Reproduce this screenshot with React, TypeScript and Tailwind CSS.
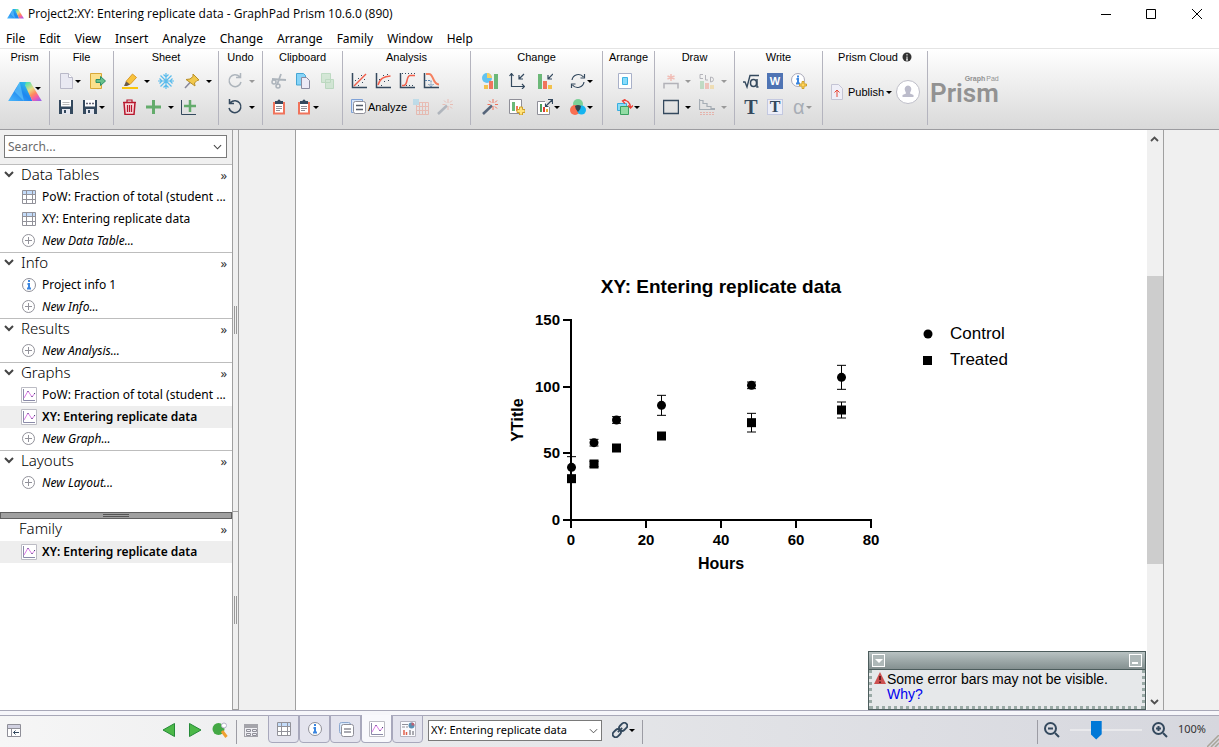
import React from 'react';

const NAVY = '#34495e';
const ORANGE = '#f0745c';
const GREEN = '#6cb878';
const GREY = '#8f8f98';

interface IconProps {
  children: React.ReactNode;
  faded?: boolean;
}

const Icon: React.FC<IconProps> = ({ children, faded }) => (
  <svg viewBox="0 0 16 16" width="16" height="16" fill="none" className={`shrink-0 ${faded ? 'opacity-35' : ''}`}>
    {children}
  </svg>
);

const Caret: React.FC<{ faded?: boolean }> = ({ faded }) => (
  <svg viewBox="0 0 8 8" width="8" height="8" className="shrink-0">
    <path d="M1 3h6L4 6z" fill={faded ? '#999' : '#000'} />
  </svg>
);

interface ToolProps {
  label: string;
  width?: string;
  caret?: 'near' | 'far';
  faded?: boolean;
  children: React.ReactNode;
}

const Tool: React.FC<ToolProps> = ({ label, width = 'w-6', caret, faded, children }) => (
  <button aria-label={label} className={`flex h-[26px] shrink-0 items-center ${width} ${caret === 'far' ? 'gap-[5px]' : ''}`}>
    <Icon faded={faded}>{children}</Icon>
    {caret && <Caret faded={faded} />}
  </button>
);

interface GroupProps {
  title: React.ReactNode;
  width: string;
  pad?: string;
  children: React.ReactNode;
}

const Group: React.FC<GroupProps> = ({ title, width, pad = 'pl-2', children }) => (
  <section className={`mt-0.5 mb-1 flex shrink-0 flex-col border-r border-[#b4b4be] ${width}`}>
    <h2 className="flex h-[17px] items-start justify-center gap-1 text-[11px] leading-3">{title}</h2>
    <div className={pad}>{children}</div>
  </section>
);

const Row: React.FC<{ children: React.ReactNode }> = ({ children }) => <div className="flex">{children}</div>;

const PrismLogo: React.FC<{ id: string; width: number; height: number }> = ({ id, width, height }) => (
  <svg viewBox="0 0 32 19" width={width} height={height}>
    <defs>
      <linearGradient id={`${id}a`} x1="0" y1="1" x2="1" y2="0">
        <stop offset="0" stopColor="#4bb8fa" />
        <stop offset="0.5" stopColor="#1e86f0" />
        <stop offset="1" stopColor="#35d6e8" />
      </linearGradient>
      <linearGradient id={`${id}b`} x1="0.2" y1="0" x2="0.8" y2="1">
        <stop offset="0" stopColor="#52e0b0" />
        <stop offset="0.35" stopColor="#e8dc82" />
        <stop offset="0.6" stopColor="#ff8a5c" />
        <stop offset="0.8" stopColor="#f45ca8" />
        <stop offset="1" stopColor="#a060e8" />
      </linearGradient>
    </defs>
    <path d="M11 0h10l-3 5 5 13H0z" fill={`url(#${id}a)`} />
    <path d="M11 0l-5 9 9 9z" fill="#6fd0fb" opacity=".55" />
    <path d="M16 3l1-3h4l11 18h-9z" fill={`url(#${id}b)`} />
  </svg>
);

const clipboardIcon = (
  <>
    <path d="M2 3h12v12.5H2z" fill={ORANGE} />
    <path d="M4 5h8v8.5H4z" fill="#fff" />
    <path d="M5 7.5h6M5 9.5h6M5 11.5h4" stroke={GREY} />
    <path d="M4 2h2.5a1.5 1.5 0 0 1 3 0H12v3H4z" fill={NAVY} />
  </>
);

const axes = <path d="M1.5 0v14.5H16" stroke={NAVY} strokeWidth="1.5" />;

const wand = (
  <>
    <path d="M1 15L10 6.500" stroke="#56657a" strokeWidth="2.500" />
    <path d="M11 0v4M11 7v4M5.500 5.500h3M13 5.500h3M7 1.500l2 2M15 1.500l-2 2M15 9.500l-2-2" stroke={ORANGE} />
  </>
);

const tableIcon = (
  <>
    <path d="M1.5 1.5h13v13h-13z" fill="#fff" />
    <path d="M1.5 1.5h13v4h-13z" fill="#c4dcfa" />
    <path d="M1.5 1.5h13v13h-13zM5.5 1.5v13M11.5 1.5v13M1.5 5.5h13M1.5 10.5h13" stroke="#92929a" />
  </>
);

const infoIcon = (
  <>
    <circle cx="8" cy="8" r="6.500" fill="#fff" stroke={GREY} />
    <path d="M8 3v2M6.500 7H8v4.500M6 11.500h4" stroke="#3b86e0" strokeWidth="2" />
  </>
);

const plusIcon = (
  <>
    <circle cx="7.5" cy="7.5" r="6" stroke="#92929a" />
    <path d="M7.5 4v7M4 7.5h7" stroke="#92929a" />
  </>
);

const graphIcon = (
  <>
    <path d="M.5.5h15v15H.5z" fill="#fff" stroke="#bcbcc4" />
    <path d="M2.5 2v11.500H14" stroke="#8a8aa8" />
    <path d="M3 11l4-7 4 6 3-4" stroke="#dc7ce8" />
    <path d="M7 4v1M11 9v1M13.500 6v1" stroke="#4a4a78" />
  </>
);

const arrowDown = <path d="M4 6l4 4 4-4" stroke="#444" strokeWidth="2" />;

interface Entry {
  text: string;
  icon: 'table' | 'info' | 'graph' | 'new';
  bold?: boolean;
}

const entryIcons = { table: tableIcon, info: infoIcon, graph: graphIcon, new: plusIcon };

const sections: { title: string; entries: Entry[] }[] = [
  {
    title: 'Data Tables',
    entries: [
      { text: 'PoW: Fraction of total (student ...', icon: 'table' },
      { text: 'XY: Entering replicate data', icon: 'table' },
      { text: 'New Data Table...', icon: 'new' },
    ],
  },
  {
    title: 'Info',
    entries: [
      { text: 'Project info 1', icon: 'info' },
      { text: 'New Info...', icon: 'new' },
    ],
  },
  { title: 'Results', entries: [{ text: 'New Analysis...', icon: 'new' }] },
  {
    title: 'Graphs',
    entries: [
      { text: 'PoW: Fraction of total (student ...', icon: 'graph' },
      { text: 'XY: Entering replicate data', icon: 'graph', bold: true },
      { text: 'New Graph...', icon: 'new' },
    ],
  },
  { title: 'Layouts', entries: [{ text: 'New Layout...', icon: 'new' }] },
];

const SectionHeader: React.FC<{ title: string; open?: boolean }> = ({ title, open }) => (
  <div className={`flex items-start pr-[5px] ${open ? 'h-[21px]' : 'h-[22px]'}`}>
    <button className="flex flex-1 items-center gap-1 pl-px text-left text-[15px] leading-[18px] font-light">
      {open ? <Icon>{arrowDown}</Icon> : <span className="w-3.5" />}
      {title}
    </button>
    <button className="pt-0.5 text-[13px] leading-4 text-[#333]">»</button>
  </div>
);

const EntryRow: React.FC<{ entry: Entry }> = ({ entry }) => {
  const tone = entry.bold ? 'bg-[#eeeeee] font-semibold' : '';
  return (
    <button className={`flex h-[22px] w-full items-center gap-[5px] pl-[21px] text-left text-[12px] whitespace-nowrap ${tone}`}>
      <Icon>{entryIcons[entry.icon]}</Icon>
      <span className={entry.icon === 'new' ? 'italic' : ''}>{entry.text}</span>
    </button>
  );
};

const Ribbon: React.FC = () => (
  <div className="flex h-[82px] shrink-0 overflow-hidden border-t border-b border-t-[#e4e4e4] border-b-[#9c9ca0] bg-linear-to-b from-white to-[#d9d9d9] font-['Liberation_Sans',sans-serif]">
    <Group title="Prism" width="w-[50px]">
      <button aria-label="Prism menu" className="flex h-12 items-center">
        <PrismLogo id="big" width={34} height={20} />
        <span className="-mt-2 -ml-2"><Caret /></span>
      </button>
    </Group>
    <Group title="File" width="w-[64px]">
      <Row>
        <Tool label="New" width="w-8" caret="near">
          <path d="M2.500.500h8l4 4v11h-12z" fill="#e9e9f2" stroke="#b9b9c8" />
          <path d="M10.500.500v4h4" fill="#fff" stroke="#b9b9c8" />
        </Tool>
        <Tool label="Open">
          <path d="M.5.500h11v15H.500z" fill="#fbe08c" stroke="#d8a838" />
          <path d="M6 6.500h4.500V3.500L15.500 8l-5 4.500v-3H6z" fill="#66c08c" stroke="#2e8f68" />
        </Tool>
      </Row>
      <Row>
        <Tool label="Save">
          <path d="M1 1h14v14H1z" fill={NAVY} />
          <path d="M3 1h10v6.500H3z" fill="#fff" />
          <path d="M4.500 3.500h7M4.500 5.500h7" stroke="#bbb" />
          <path d="M4 10h8v5H4z" fill="#e4e6ee" />
          <path d="M6 11h2v3H6z" fill={NAVY} />
        </Tool>
        <Tool label="Save as" caret="near">
          <path d="M1 1h14v14H1z" fill={NAVY} />
          <path d="M3 1h10v6.500H3z" fill="#fff" />
          <path d="M4 4.500h2M7 4.500h2M10 4.500h2" stroke="#667" strokeWidth="1.500" />
          <path d="M4 10h8v5H4z" fill="#e4e6ee" />
          <path d="M6 11h2v3H6z" fill={NAVY} />
        </Tool>
      </Row>
    </Group>
    <Group title="Sheet" width="w-[105px]">
      <Row>
        <Tool label="Highlight" width="w-9" caret="far">
          <path d="M0 14h16v2H0z" fill="#f9c50c" />
          <path d="M4 8.500l6.500-7.500 4 3.500L8 11.500z" fill="#f8c23c" stroke="#d99a28" />
          <path d="M4 8.500l4 3L5 13H2z" fill="#6b5a48" />
        </Tool>
        <Tool label="Freeze" width="w-[26px]">
          <path d="M8 0v16M0 8h16M2.500 2.500l11 11M13.500 2.500l-11 11M5.500 1.500L8 4l2.500-2.500M5.500 14.500L8 12l2.500 2.500M1.500 5.500L4 8l-2.500 2.500M14.500 5.500L12 8l2.500 2.500" stroke="#5cbcec" strokeWidth="1.200" />
        </Tool>
        <Tool label="Pin" caret="far">
          <path d="M1 15l5.500-6" stroke="#889" strokeWidth="1.500" />
          <path d="M9 1l6 6-2 .5-2.500 2.500.5 3L2 6.500l4-.5L9 3.500z" fill="#f1c84c" stroke="#b98f28" />
        </Tool>
      </Row>
      <Row>
        <Tool label="Delete">
          <path d="M2 3.500h11l-1 12H3z" fill="#f8d8dc" stroke="#b8182e" strokeWidth="1.500" />
          <path d="M1 3.500h13M5 3V1h5v2M5.500 6v7M7.500 6v7M9.500 6v7" stroke="#b8182e" strokeWidth="1.200" />
        </Tool>
        <Tool label="Add" width="w-[34px]" caret="far">
          <path d="M7.500 1v14M0 8h15" stroke="#64ac6c" strokeWidth="3" />
        </Tool>
        <Tool label="Add graph">
          <path d="M1.500 1v14.500H16" stroke={NAVY} />
          <path d="M10 1v12M4 7h12" stroke="#64ac6c" strokeWidth="2.500" />
        </Tool>
      </Row>
    </Group>
    <Group title="Undo" width="w-[44px]">
      <Row>
        <Tool label="Redo" caret="far" faded>
          <path d="M12.500 3.500A6 6 0 1 0 14 9M13.500 0v4.500H9" stroke={NAVY} strokeWidth="1.500" />
        </Tool>
      </Row>
      <Row>
        <Tool label="Undo" caret="far">
          <path d="M3.500 3.500A6 6 0 1 1 2 9M2.500 0v4.500H7" stroke={NAVY} strokeWidth="1.500" />
        </Tool>
      </Row>
    </Group>
    <Group title="Clipboard" width="w-[80px]">
      <Row>
        <Tool label="Cut" width="w-[25px]" faded>
          <path d="M1 6l14 1M10 1L6 12" stroke={NAVY} strokeWidth="1.800" />
          <circle cx="3" cy="9" r="2" stroke={NAVY} strokeWidth="1.500" />
          <circle cx="7" cy="13" r="2" stroke={NAVY} strokeWidth="1.500" />
        </Tool>
        <Tool label="Copy" width="w-[25px]">
          <path d="M.5.500h7l2 2V12h-9z" fill="#86d4f8" stroke="#45a6d4" />
          <path d="M5.500 4.500h5l3 3v8h-8z" fill="#eceaf6" stroke="#8b8ba0" />
        </Tool>
        <Tool label="Paste" faded>
          <path d="M.5.500h9v9h-9zM4.500 6.500h8v9h-8z" fill="#9dd4a4" stroke="#5fb06c" />
        </Tool>
      </Row>
      <Row>
        <Tool label="Paste data" width="w-[25px]">{clipboardIcon}</Tool>
        <Tool label="Paste special" caret="near">{clipboardIcon}</Tool>
      </Row>
    </Group>
    <Group title="Analysis" width="w-[128px]">
      <Row>
        <Tool label="Linear regression">
          {axes}
          <path d="M3 13L15 1" stroke="#f0604c" strokeWidth="1.500" />
          <path d="M4 7.500h1M7 5.500h1M10 2.500h1M7 12.500h1M11 9.500h1M13 6.500h1" stroke={NAVY} />
        </Tool>
        <Tool label="Nonlinear regression">
          {axes}
          <path d="M3 12C5 5 9 3.500 15.500 3" stroke="#f0604c" strokeWidth="1.500" />
          <path d="M4 6.500h1M8 2.500h1M12 1.500h1M6 12.500h1M9 8.500h1M13 7.500h1" stroke={NAVY} />
        </Tool>
        <Tool label="Dose response">
          {axes}
          <path d="M3 12.500h2C9 12 7 3 11 2.500h5" stroke="#f0604c" strokeWidth="1.500" />
          <path d="M3 .5h13" stroke={NAVY} strokeDasharray="1 2" />
          <path d="M7 12.500h9" stroke={NAVY} strokeDasharray="1 2" />
        </Tool>
        <Tool label="Interpolate">
          {axes}
          <path d="M3 1h3c5 0 3 10 10 10.500" stroke="#f58060" strokeWidth="2" />
          <path d="M2 7.500h6V14M5.500 11L8 14l2.500-3" stroke="#5a82ac" strokeDasharray="2 1" />
        </Tool>
      </Row>
      <Row>
        <button className="flex h-[26px] w-[62px] shrink-0 items-center gap-px text-[11px]">
          <Icon>
            <path d="M2.500 13.500h-2v-13h11v2" fill="#d5e5fa" stroke="#7fa2d8" />
            <rect x="2.500" y="2.500" width="12" height="12" rx="2" fill="#fff" stroke={GREY} />
            <path d="M5 6.500h7M5 10.500h7" stroke="#555c68" strokeWidth="1.500" />
          </Icon>
          Analyze
        </button>
        <Tool label="Analyze table" faded>
          <path d="M3.500 3.500h12v12h-12zM6.500 4v12M9.500 4v12M12.500 4v12M4 7.500h12M4 11.500h12" stroke={ORANGE} />
          <path d="M0 0h6v6H0z" fill="#76c8ec" />
        </Tool>
        <Tool label="Wizard" faded>{wand}</Tool>
      </Row>
    </Group>
    <Group title="Change" width="w-[132px]" pad="pl-[11px]">
      <Row>
        <Tool label="Graph type" width="w-[27px]">
          <circle cx="5" cy="5" r="5" fill="#62c3f0" />
          <path d="M5 5V0a5 5 0 0 1 5 5z" fill="#f8d060" />
          <path d="M12 1h4v15h-4z" fill={GREEN} />
          <path d="M7 8h4v8H7z" fill={ORANGE} />
          <path d="M2 12h4v4H2z" fill="#f2c14c" />
        </Tool>
        <Tool label="Axes" width="w-7">
          <path d="M2.500 1v12.500H15M.5 3l2-2.500 2 2.500M13 11l2.500 2.500L13 16M15 1l-5 5M10 2v4h4" stroke={NAVY} strokeWidth="1.200" />
        </Tool>
        <Tool label="Bars" width="w-[33px]">
          <path d="M1 1h4v15H1z" fill={GREEN} />
          <path d="M6 8h4v8H6z" fill={ORANGE} />
          <path d="M11 12h4v4h-4z" fill="#f2c14c" />
          <path d="M16 1l-5 5M11 2v4h4" stroke={NAVY} strokeWidth="1.200" />
        </Tool>
        <Tool label="Refresh" caret="near">
          <path d="M2 7a6.500 6.500 0 0 1 11.500-3M14 9a6.500 6.500 0 0 1-11.500 3M14.500 1v4h-4M1.500 15v-4h4" stroke={NAVY} strokeWidth="1.200" />
        </Tool>
      </Row>
      <Row>
        <Tool label="Magic" width="w-[27px]">{wand}</Tool>
        <Tool label="Add data set" width="w-7">
          <path d="M.5.500h12v14H.5z" fill="#fff" stroke={GREY} />
          <path d="M3 3h3v9H3z" fill={GREEN} />
          <path d="M7 7h2v5H7z" fill={ORANGE} />
          <path d="M10.500 8v2.500H8v3h2.500V16h3v-2.500H16v-3h-2.500V8z" fill="#ffe27c" stroke="#d0a028" />
        </Tool>
        <Tool label="Resize" width="w-[33px]" caret="near">
          <path d="M8 2.500H.5v13h12V8" fill="#fff" stroke={GREY} />
          <path d="M3 5h2v8H3z" fill="#4d9c5c" />
          <path d="M6 8h2v5H6z" fill="#e03c34" />
          <path d="M9 10h2v3H9z" fill="#e8b030" />
          <path d="M9 7l6-6M11 .5h4.500V5M8.500 4.500v3h3" stroke={NAVY} strokeWidth="1.200" />
        </Tool>
        <Tool label="Colors" caret="near">
          <circle cx="8" cy="5" r="5" fill="#7cd098" />
          <circle cx="5" cy="11" r="5" fill="#fa6e50" />
          <circle cx="11.500" cy="11" r="4.500" fill="#14b4f0" />
          <path d="M5 7Q8 5 11 7Q11 10 8 13Q5 10 5 7z" fill="#33434c" />
        </Tool>
      </Row>
    </Group>
    <Group title="Arrange" width="w-[52px]" pad="pl-3.5">
      <Row>
        <Tool label="Center">
          <path d="M1.500.500h13v15h-13z" fill="#fff" stroke="#a8b0c8" />
          <path d="M5.500 4.500h5v7h-5z" fill="#88dcfb" stroke="#3fb4e4" />
        </Tool>
      </Row>
      <Row>
        <Tool label="Rotate" caret="near">
          <path d="M.5 4.500h9v7h-9z" fill="#8bdcf4" stroke="#39aee0" />
          <path d="M3.500 7.500h8v8h-8z" fill="#92dca4" stroke="#3aa060" />
          <path d="M6 1.500c4-1 7 2 7.500 6.500M8.500.200L5.500 2l2.500 2.500M11 6.500l2.500 2.500L16 6.500" stroke="#ee4036" strokeWidth="1.300" />
        </Tool>
      </Row>
    </Group>
    <Group title="Draw" width="w-[80px]">
      <Row>
        <Tool label="Significance" width="w-9" caret="far" faded>
          <path d="M1 15.500v-5h14v5" stroke="#445" strokeWidth="1.500" />
          <path d="M8 1v7M4.500 3l7 3M11.500 3l-7 3" stroke="#f0604c" strokeWidth="1.500" />
        </Tool>
        <Tool label="Letters" caret="far" faded>
          <path d="M4 1.500H1v4h3M6.500 2v5H9M11.500 4v5q3 0 3-2.500t-3-2.500z" stroke="#445" />
          <path d="M1 8h4v8H1z" fill={GREEN} />
          <path d="M6 10h4v6H6z" fill={ORANGE} />
          <path d="M11 12h4v4h-4z" fill="#f2c14c" />
        </Tool>
      </Row>
      <Row>
        <Tool label="Rectangle" width="w-9" caret="far">
          <path d="M.5 1.500h15v13H.5z" stroke={NAVY} strokeWidth="1.500" />
        </Tool>
        <Tool label="Survival line" caret="far" faded>
          <path d="M.5 0v10.500H16M1 1.500h3v3h4v3h4v2h4" stroke={NAVY} strokeWidth="1.200" />
          <path d="M1 13.500h15" stroke="#f0604c" strokeDasharray="2 1" />
          <path d="M1 15.500h15" stroke="#f0604c" strokeDasharray="2 1" />
        </Tool>
      </Row>
    </Group>
    <Group title="Write" width="w-[88px]">
      <Row>
        <Tool label="Equation">
          <path d="M0 9h2l2 5L7 2.500h9" stroke={NAVY} strokeWidth="1.400" />
          <ellipse cx="10.500" cy="10" rx="3" ry="3.500" stroke={NAVY} strokeWidth="1.500" />
          <path d="M14 6v8h1.500" stroke={NAVY} strokeWidth="1.500" />
        </Tool>
        <button aria-label="Word" className="flex h-[26px] w-6 items-center">
          <span className="flex size-4 items-center justify-center bg-[#4f74b4] text-[11px] font-bold text-white">W</span>
        </button>
        <Tool label="Info">
          <circle cx="7" cy="7" r="6.500" fill="#fff" stroke="#a8a8b8" />
          <path d="M7 2.500v2M5.500 6H7v4.500M5 10.500h4" stroke="#3b86e0" strokeWidth="2" />
          <path d="M11 8.500v2.500H8.500v2H11v2.500h2V13h2.500v-2H13V8.500z" fill="#ffd45c" stroke="#d0a028" />
        </Tool>
      </Row>
      <div className="flex h-[26px] items-center font-['Liberation_Serif',serif] text-[20px] leading-5 text-[#34495e]">
        <button className="w-6 pr-2 text-center font-bold">T</button>
        <button className="w-6"><span className="flex size-4 items-center justify-center border border-[#c3c8e0] bg-[#eceef8] text-[16px] leading-4 font-bold">T</span></button>
        <button className="flex items-center pl-0.5 text-[#a8aeb6]">
          <span className="font-['Liberation_Sans',sans-serif] text-[20px]">α</span>
          <Caret faded />
        </button>
      </div>
    </Group>
    <Group
      width="w-[105px]"
      title={
        <>
          Prism Cloud
          <svg viewBox="0 0 10 10" width="10" height="10" className="mt-px">
            <circle cx="5" cy="5" r="4.500" fill="#333" />
            <path d="M5 2v1.500M5 4.500V8M4 8h2" stroke="#fff" />
          </svg>
        </>
      }
    >
      <div className="flex h-12 items-center text-[11px]">
        <button className="flex items-center gap-px">
          <Icon>
            <path d="M.5.500h7l4 4v11H.500z" fill="#efeff8" stroke="#c4c4d4" />
            <path d="M6 13V6M3.500 8.500L6 6l2.500 2.500" stroke="#e84838" />
          </Icon>
          Publish
          <Caret />
        </button>
        <button aria-label="Account" className="ml-[3px]">
          <svg viewBox="0 0 24 24" width="24" height="24">
            <circle cx="12" cy="12" r="11.500" fill="#fff" stroke="#bebec8" />
            <path d="M12 5.500a3.500 3.500 0 0 1 3 5c-.5 1.500-1 2-1 3l3.500 1.500v2h-11v-2l3.500-1.500c0-1-.5-1.500-1-3a3.500 3.500 0 0 1 3-5z" fill="#bcbccb" />
          </svg>
        </button>
      </div>
    </Group>
    <div className="flex flex-col items-end self-start pt-6 pl-0.5 text-[#929292]">
      <span className="flex gap-px text-[7px] leading-3"><b>Graph</b><span>Pad</span></span>
      <span className="font-['Roboto',sans-serif] text-[26px] leading-4 font-semibold">Prism</span>
    </div>
  </div>
);

const Sidebar: React.FC = () => (
  <aside className="flex w-[232px] shrink-0 flex-col bg-white">
    <div className="bg-[#f0f0f0] px-1 pt-[5px] pb-1.5">
      <div className="flex h-[23px] w-[223px] items-center border border-[#7a7a7a] bg-white pr-1">
        <input aria-label="Search" placeholder="Search..." className="min-w-0 flex-1 px-[3px] text-[12px] outline-none placeholder:text-[#6a6a6a]" />
        <button aria-label="Search options">
          <svg viewBox="0 0 10 6" width="9" height="6" fill="none"><path d="M1 1l4 4 4-4" stroke="#444" strokeWidth="1.200" /></svg>
        </button>
      </div>
    </div>
    {sections.map((section) => (
      <div key={section.title} className="border-t border-[#bdbdbd]">
        <SectionHeader title={section.title} open />
        {section.entries.map((entry) => <EntryRow key={entry.text} entry={entry} />)}
      </div>
    ))}
    {/* sash between the navigator and the family list */}
    <div className="mt-[18px] flex h-[7px] items-center justify-center border border-[#606060] bg-[#a0a0a0]">
      <span className="h-[3px] w-[26px] border-y border-[#555]" />
    </div>
    <SectionHeader title="Family" />
    <EntryRow entry={{ text: 'XY: Entering replicate data', icon: 'graph', bold: true }} />
  </aside>
);

const Splitter: React.FC = () => (
  <div className="flex w-[7px] shrink-0 flex-col border-x border-[#a0a0a0] bg-[#f0f0f0]">
    {['grow-[382]', 'grow-[198]'].map((grow) => (
      <div key={grow} className={`flex basis-0 items-center justify-center border-b border-[#a0a0a0] ${grow}`}>
        <span className="h-7 w-[3px] border-x border-[#999]" />
      </div>
    ))}
  </div>
);

const control = [
  { x: 0, y: 39.5, err: 8 },
  { x: 6, y: 58, err: 2.5 },
  { x: 12, y: 75, err: 2.5 },
  { x: 24, y: 86, err: 7.5 },
  { x: 48, y: 101, err: 2.5 },
  { x: 72, y: 107, err: 9 },
];

const treated = [
  { x: 0, y: 31, err: 1 },
  { x: 6, y: 42, err: 2 },
  { x: 12, y: 54, err: 2 },
  { x: 24, y: 63, err: 1 },
  { x: 48, y: 73, err: 7 },
  { x: 72, y: 82.5, err: 6 },
];

const sx = (v: number) => 150 + v * 3.75;
const sy = (v: number) => 260 - (v * 4) / 3;

const Chart: React.FC = () => (
  <svg viewBox="0 0 601 320" width="601" height="320" className="shrink-0 font-['Liberation_Sans',Arial,sans-serif]">
    <text x="300" y="33" textAnchor="middle" fontSize="19" fontWeight="bold">XY: Entering replicate data</text>
    <path d="M150 59V268M142 260H451" stroke="#000" strokeWidth="2" fill="none" />
    {[0, 50, 100, 150].map((v) => (
      <g key={v}>
        <path d={`M142 ${Math.round(sy(v))}h8`} stroke="#000" strokeWidth="2" />
        <text x="139" y={Math.round(sy(v)) + 5} textAnchor="end" fontSize="15" fontWeight="bold">{v}</text>
      </g>
    ))}
    {[0, 20, 40, 60, 80].map((v) => (
      <g key={v}>
        <path d={`M${sx(v)} 260v8`} stroke="#000" strokeWidth="2" />
        <text x={sx(v)} y="285" textAnchor="middle" fontSize="15" fontWeight="bold">{v}</text>
      </g>
    ))}
    <text x="300" y="309" textAnchor="middle" fontSize="16" fontWeight="bold">Hours</text>
    <text transform="translate(102 160) rotate(-90)" textAnchor="middle" fontSize="16" fontWeight="bold">YTitle</text>
    {[...control, ...treated].map((p, i) => (
      <path
        key={i}
        d={`M${sx(p.x) - 4} ${sy(p.y + p.err)}h9M${sx(p.x) - 4} ${sy(p.y - p.err)}h9M${sx(p.x) + 0.5} ${sy(p.y + p.err)}V${sy(p.y - p.err)}`}
        stroke="#000"
        fill="none"
      />
    ))}
    {control.map((p) => <circle key={p.x} cx={sx(p.x) + 0.5} cy={sy(p.y)} r="4.5" />)}
    {treated.map((p) => <rect key={p.x} x={sx(p.x) - 4} y={sy(p.y) - 4.5} width="9" height="9" />)}
    <circle cx="507" cy="74" r="4.5" />
    <text x="529" y="79" fontSize="17">Control</text>
    <rect x="502" y="96" width="9" height="9" />
    <text x="529" y="105" fontSize="17">Treated</text>
  </svg>
);

const Notice: React.FC = () => (
  <div className="absolute right-px bottom-0 h-[59px] w-[278px] border border-[#4c5c5c] bg-[#e6e8ea] font-['Liberation_Sans',Arial,sans-serif]">
    <div className="flex h-[18px] items-center justify-between border-b border-[#4c5c5c] bg-linear-to-b from-[#b8c2c2] to-[#849090] px-[3px]">
      <button aria-label="Collapse" className="flex size-[13px] items-center justify-center border border-white bg-[#aeb8b8]">
        <svg viewBox="0 0 8 8" width="8" height="8"><path d="M0 2h8L4 6z" fill="#fff" /></svg>
      </button>
      <button aria-label="Minimize" className="flex size-[13px] items-end border border-white bg-[#aeb8b8] p-0.5">
        <span className="h-0.5 w-1.5 bg-white" />
      </button>
    </div>
    <div className="flex h-[39px] gap-px border-x-3 border-b-3 border-dotted border-[#9aaaa6] pl-0.5 text-[14px] leading-[15px]">
      <svg viewBox="0 0 12 12" width="12" height="12" className="mt-0.5 shrink-0">
        <path d="M6 0l6 12H0z" fill="#cc5050" />
        <path d="M6 4v4M6 9.500V11" stroke="#401010" strokeWidth="1.500" />
      </svg>
      <p className="pt-0.5">
        Some error bars may not be visible.
        <br />
        <a href="#why" className="text-[#0000ee]">Why?</a>
      </p>
    </div>
  </div>
);

const Scrollbar: React.FC = () => (
  <div className="flex w-4 shrink-0 flex-col bg-[#f0f0f0]">
    <button aria-label="Scroll up" className="flex h-[17px] items-center justify-center">
      <Icon><path d="M4 10l3.500-3.500L11 10" stroke="#505050" strokeWidth="1.800" /></Icon>
    </button>
    <div className="grow-[129]" />
    <div className="grow-[288] bg-[#cdcdcd]" />
    <div className="grow-[129]" />
    <button aria-label="Scroll down" className="flex h-[17px] items-center justify-center">
      <Icon><path d="M4 6l3.500 3.500L11 6" stroke="#505050" strokeWidth="1.800" /></Icon>
    </button>
  </div>
);

const tabs = [
  { name: 'Data Tables', icon: tableIcon },
  { name: 'Info', icon: infoIcon },
  {
    name: 'Results',
    icon: (
      <>
        <rect x="1.500" y="1.500" width="11" height="11" rx="2" fill="#dceafb" stroke="#8ca8d0" />
        <rect x="3.500" y="3.500" width="12" height="12" rx="2" fill="#fff" stroke={GREY} />
        <path d="M6 8h7M6 11h7" stroke={GREY} strokeWidth="1.500" />
      </>
    ),
  },
  { name: 'Graphs', icon: graphIcon, active: true },
  {
    name: 'Layouts',
    icon: (
      <>
        <path d="M.5.500h15v15H.5z" fill="#fafafe" stroke="#b4b4c0" />
        <path d="M2 3.500h6M2 6h3M6 6h2" stroke={GREY} />
        <circle cx="11.500" cy="4.500" r="3" fill="#5a90b4" />
        <path d="M11.500 4.500v-3a3 3 0 0 1 3 3z" fill="#c06070" />
        <path d="M4 9v5M6.500 11v3" stroke="#e0604c" strokeWidth="1.500" />
        <path d="M10 9v5M13 10v4" stroke={GREY} strokeWidth="1.500" />
      </>
    ),
  },
];

const Divider: React.FC = () => <span className="mt-1 h-6 w-px shrink-0 bg-[#9c9ca4]" />;

const StatusBar: React.FC = () => (
  <footer className="shrink-0 border-t border-[#a8a8b8] bg-[#f6f6fa] pt-1">
    <div className="flex h-8 border-t border-[#a8a8b8] bg-linear-to-r from-[#f6f6f6] via-[#e4e5e8] via-50% to-[#d6d7de]">
      <div className="flex w-[236px] shrink-0 items-center justify-between pb-1 pl-1.5">
        <button aria-label="Toggle navigator">
          <Icon>
            <path d="M1.500 2.500h13v12h-13z" fill="#fff" stroke={GREY} />
            <path d="M2 3h12v3H2z" fill="#d0d0e0" />
            <path d="M2 6.500h12M5.500 6.500v8" stroke={GREY} />
            <path d="M13 10.500H7.500M9.500 8.500l-2 2 2 2" stroke={NAVY} />
          </Icon>
        </button>
        <div className="flex gap-2.5 pr-2">
          <button aria-label="Previous sheet"><Icon><path d="M14.500 1.500v13L3 8z" fill="#4cb848" stroke="#258a38" /></Icon></button>
          <button aria-label="Next sheet"><Icon><path d="M3.500 1.500v13L15 8z" fill="#4cb848" stroke="#258a38" /></Icon></button>
          <button aria-label="Family sheet">
            <Icon>
              <circle cx="6.500" cy="7" r="6" fill="#44a844" />
              <path d="M10 9l4.500 6" stroke="#f0a030" strokeWidth="3" />
              <circle cx="12" cy="3.500" r="2.500" fill="#fff" stroke="#b4b4c8" />
            </Icon>
          </button>
        </div>
      </div>
      <Divider />
      <button aria-label="Gallery" className="flex w-[31px] items-center pb-1 pl-1.5">
        <Icon>
          <path d="M1 2h14v13H1z" fill="#a4a4aa" />
          <path d="M2 6h12v8H2z" fill="#f0f0f4" />
          <path d="M3.500 7.500h4v2h-4zM9.500 7.500h4v2h-4zM3.500 11.500h4v2h-4zM9.500 11.500h4v2h-4z" stroke={GREY} />
        </Icon>
      </button>
      <div className="-mt-px flex h-7">
        {tabs.map((tab) => (
          <button
            key={tab.name}
            aria-label={tab.name}
            className={`flex w-[31px] items-center justify-center rounded-b-sm border-r border-b border-l border-[#a8a8bc] ${tab.active ? 'bg-[#f8f8fc]' : 'border-t bg-[#e4e4ee]'}`}
          >
            <Icon>{tab.icon}</Icon>
          </button>
        ))}
      </div>
      <div className="relative mt-1 ml-[5px] flex h-[21px] w-[174px] items-center">
        <select aria-label="Sheet" className="size-full appearance-none border border-[#7a7a7a] bg-white pr-4 pl-0.5 text-[11px] outline-none">
          <option>XY: Entering replicate data</option>
        </select>
        <svg viewBox="0 0 10 6" width="9" height="6" fill="none" className="pointer-events-none absolute right-1"><path d="M1 1l4 4 4-4" stroke="#444" /></svg>
      </div>
      <button aria-label="Link" className="ml-2.5 flex items-center pr-1.5 pb-1">
        <Icon>
          <g transform="rotate(45 8 8)" stroke={NAVY} strokeWidth="1.800">
            <rect x="5" y="-1" width="6" height="9" rx="3" />
            <rect x="5" y="8" width="6" height="9" rx="3" />
            <path d="M8 5v6" />
          </g>
        </Icon>
        <Caret />
      </button>
      <Divider />
      <div className="flex-1" />
      <Divider />
      <div className="flex items-center gap-2.5 pr-px pb-1 pl-1.5">
        <button aria-label="Zoom out">
          <Icon>
            <circle cx="6.500" cy="6.500" r="5.500" stroke={NAVY} strokeWidth="2" />
            <path d="M4 6.500h5M11 11l4 4" stroke={NAVY} strokeWidth="2" />
          </Icon>
        </button>
        <input
          type="range"
          aria-label="Zoom"
          min="0"
          max="100"
          defaultValue="34"
          className="h-5 w-[72px] appearance-none bg-transparent [&::-webkit-slider-runnable-track]:h-0.5 [&::-webkit-slider-runnable-track]:bg-[#e9e9ec] [&::-webkit-slider-thumb]:-mt-2 [&::-webkit-slider-thumb]:h-[19px] [&::-webkit-slider-thumb]:w-[11px] [&::-webkit-slider-thumb]:appearance-none [&::-webkit-slider-thumb]:bg-[#0078d7] [&::-webkit-slider-thumb]:[clip-path:polygon(0_0,100%_0,100%_72%,50%_100%,0_72%)]"
        />
        <button aria-label="Zoom in">
          <Icon>
            <circle cx="6.500" cy="6.500" r="5.500" stroke={NAVY} strokeWidth="2" />
            <path d="M4 6.500h5M6.500 4v5M11 11l4 4" stroke={NAVY} strokeWidth="2" />
          </Icon>
        </button>
        <span className="text-[11px] text-[#333]">100%</span>
      </div>
      <svg viewBox="0 0 12 12" width="12" height="12" fill="none" className="shrink-0 self-end">
        <path d="M0 12L12 0M4 12l8-8M8 12l4-4" stroke="#a8a498" strokeWidth="1.500" />
      </svg>
    </div>
  </footer>
);

const menus = ['File', 'Edit', 'View', 'Insert', 'Analyze', 'Change', 'Arrange', 'Family', 'Window', 'Help'];

const App: React.FC = () => (
  <div className="flex h-screen min-h-[600px] flex-col overflow-hidden bg-[#f0f0f0] font-['Noto_Sans','Noto_Sans_CJK_TC',sans-serif] text-black">
    <header className="flex h-7 shrink-0 items-center bg-white pl-[7px]">
      <PrismLogo id="small" width={17} height={10} />
      <h1 className="flex-1 pl-1 font-['Open_Sans',sans-serif] text-[12px]">Project2:XY: Entering replicate data - GraphPad Prism 10.6.0 (890)</h1>
      <div className="flex">
        <button aria-label="Minimize" className="flex w-[46px] justify-center"><Icon><path d="M4 8.500h10" stroke="#000" /></Icon></button>
        <button aria-label="Maximize" className="flex w-[45px] justify-center"><Icon><path d="M3.500 3.500h9v9h-9z" stroke="#000" /></Icon></button>
        <button aria-label="Close" className="flex w-[46px] justify-center"><Icon><path d="M4 3l10 10M14 3L4 13" stroke="#000" /></Icon></button>
      </div>
    </header>
    <nav className="flex h-5 shrink-0 items-center gap-3.5 bg-white pt-0.5 pl-1.5 text-[12px]">
      {menus.map((menu) => <button key={menu}>{menu}</button>)}
    </nav>
    <Ribbon />
    <div className="flex min-h-0 flex-1">
      <Sidebar />
      <Splitter />
      <div className="w-[57px] shrink-0 border-r border-[#a0a0a0]" />
      <main className="relative flex min-w-0 flex-1 items-center justify-center overflow-hidden bg-white">
        <Chart />
        <Notice />
      </main>
      <Scrollbar />
      <div className="w-14 shrink-0 border-l border-[#a0a0a0]" />
    </div>
    <StatusBar />
  </div>
);

export default App;
